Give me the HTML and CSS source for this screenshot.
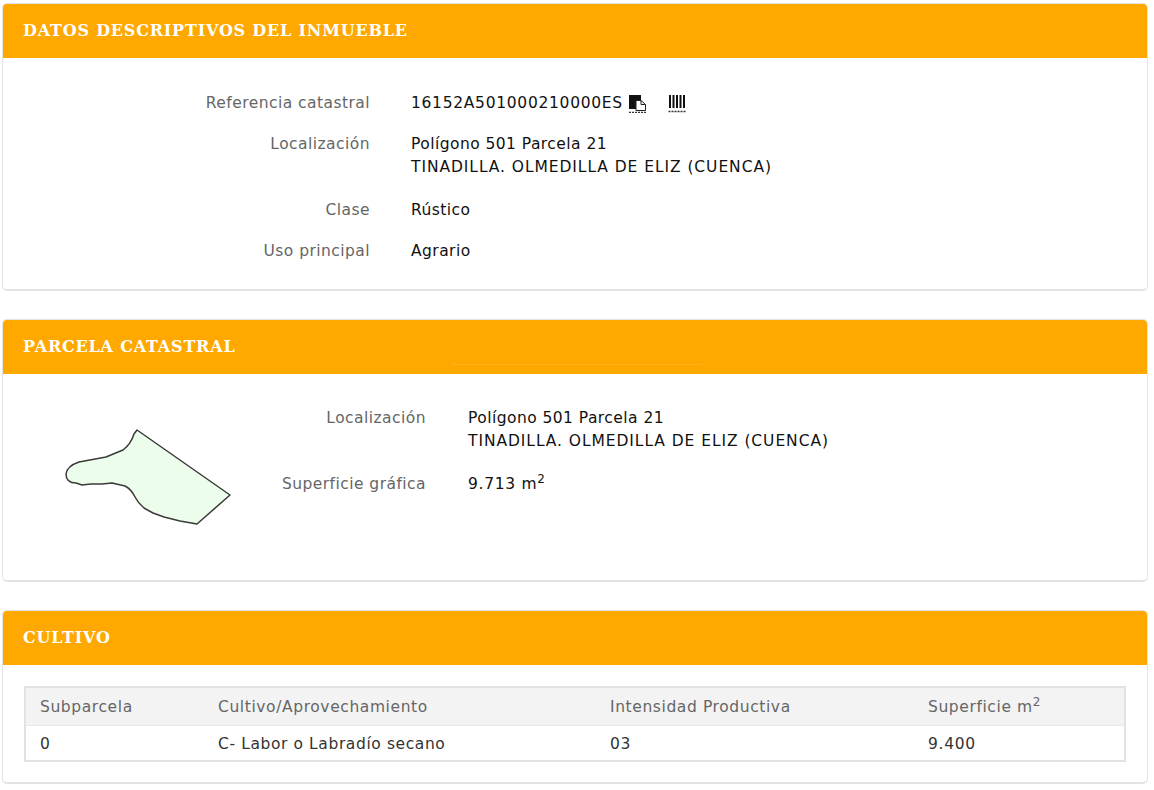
FILE: index.html
```html
<!DOCTYPE html>
<html lang="es">
<head>
    <meta charset="UTF-8">
    <title>Datos descriptivos del inmueble</title>
    <link rel="stylesheet" href="styles.css">
</head>
<body>

    <section class="panel panel-datos">
        <h2 class="panel-title">DATOS DESCRIPTIVOS DEL INMUEBLE</h2>
        <dl class="fields">
            <dt>Referencia catastral</dt>
            <dd class="ref-row">
                <span class="ref-code">16152A501000210000ES</span>
                <a class="icon-link icon-copy" href="#" title="Copiar">
                    <svg width="18" height="19" viewBox="0 0 18 19">
                        <rect x="0" y="1" width="12" height="14" fill="#111"/>
                        <path d="M7 6.500h5l4.500 4v6H7z" fill="#fff" stroke="#222" stroke-width="1"/>
                        <path d="M12 6.500v4h4.500" fill="none" stroke="#222" stroke-width="1"/>
                        <path d="M0 18.500h17" stroke="#333" stroke-width="1.500" stroke-dasharray="2 1"/>
                    </svg>
                </a>
                <a class="icon-link icon-barcode" href="#" title="Código de barras">
                    <svg width="18" height="19" viewBox="0 0 18 19">
                        <path d="M2 1v13M5.500 1v13M9 1v13M12.500 1v13M16 1v13" stroke="#111" stroke-width="2"/>
                        <path d="M0.500 17.500h17" stroke="#333" stroke-width="1.500" stroke-dasharray="2 1"/>
                    </svg>
                </a>
            </dd>
            <dt>Localización</dt>
            <dd class="multi">Polígono 501 Parcela 21<br><span class="caps">TINADILLA. OLMEDILLA DE ELIZ (CUENCA)</span></dd>
            <dt>Clase</dt>
            <dd>Rústico</dd>
            <dt>Uso principal</dt>
            <dd>Agrario</dd>
        </dl>
    </section>

    <section class="panel panel-parcela">
        <h2 class="panel-title">PARCELA CATASTRAL<span class="watermark"></span></h2>
        <div class="parcela-body">
            <svg class="parcela-map" width="200" height="110" viewBox="0 0 200 110">
                <path d="M105 4 L198 69 L165 98 L148 95 L132 91 L121 87 L112 82 Q106 77 103 71 Q99 63 93 60 L80 57 L70 58 L59 58 L50 59 L44 57 Q34 57 34 48 Q35 40 47 36 L74 31 L91 24 Q99 18 102 8 Z" fill="#ecfdec" stroke="#3a3a3a" stroke-width="1.500" stroke-linejoin="round"/>
            </svg>
            <dl class="fields fields-parcela">
                <dt>Localización</dt>
                <dd>Polígono 501 Parcela 21<br><span class="caps">TINADILLA. OLMEDILLA DE ELIZ (CUENCA)</span></dd>
                <dt>Superficie gráfica</dt>
                <dd class="ref-code">9.713 m<sup>2</sup></dd>
            </dl>
        </div>
    </section>

    <section class="panel panel-cultivo">
        <h2 class="panel-title">CULTIVO</h2>
        <div class="table-wrap">
            <table class="cultivo-table">
                <thead>
                    <tr>
                        <th class="col-sub">Subparcela</th>
                        <th class="col-cult">Cultivo/Aprovechamiento</th>
                        <th class="col-int">Intensidad Productiva</th>
                        <th>Superficie m<sup>2</sup></th>
                    </tr>
                </thead>
                <tbody>
                    <tr>
                        <td class="ref-code">0</td>
                        <td>C- Labor o Labradío secano</td>
                        <td class="ref-code">03</td>
                        <td class="ref-code">9.400</td>
                    </tr>
                </tbody>
            </table>
        </div>
    </section>

</body>
</html>
```

FILE: styles.css
```css
* {
    box-sizing: border-box;
}

body {
    margin: 0;
    padding: 3px 6px 0 2px;
    background-color: #fff;
    color: #111;
    font-family: "DejaVu Sans", Verdana, sans-serif;
    font-size: 15.5px;
    letter-spacing: 0.45px;
    line-height: 23px;
}

.panel {
    border: 1px solid #e4e4e4;
    border-bottom-width: 2px;
    border-radius: 5px;
    margin-bottom: 28px;
    overflow: hidden;
}

.panel-datos { height: 288px; }
.panel-parcela { height: 263px; }
.panel-cultivo { height: 174px; }

.panel-title {
    position: relative;
    margin: 0;
    height: 54px;
    padding-left: 20px;
    background-color: #ffa800;
    color: #fff;
    font-family: "DejaVu Serif", "DejaVu Sans", serif;
    font-size: 16px;
    font-weight: bold;
    letter-spacing: 0.8px;
    line-height: 54px;
}

/* faint mark showing through the header */
.watermark {
    position: absolute;
    left: 449px;
    bottom: 0;
    width: 250px;
    height: 10px;
    border-top: 1px solid rgba(255, 255, 255, 0.1);
}

.fields {
    display: grid;
    grid-template-columns: 367px 1fr;
    column-gap: 41px;
    row-gap: 18px;
    margin: 0;
    padding-top: 34px;
}

.fields dt {
    color: #666;
    text-align: right;
}

.fields dd {
    margin: 0;
}

.fields .multi {
    margin-bottom: 2px;
}

.caps {
    letter-spacing: 0.93px;
}

.ref-code {
    letter-spacing: 0.7px;
}

.ref-row {
    display: flex;
    align-items: center;
}

.icon-link {
    display: flex;
    height: 19px;
}

.icon-copy { margin-left: 6px; }
.icon-barcode { margin-left: 21px; }

.parcela-body {
    display: flex;
}

.parcela-map {
    flex: none;
    display: block;
    margin: 52px 0 0 29px;
}

.fields-parcela {
    grid-template-columns: 194px 1fr;
    column-gap: 42px;
    padding-top: 33px;
    row-gap: 20px;
    align-content: start;
}

sup {
    font-size: 12px;
    line-height: 0;
}

.table-wrap {
    padding: 21px 21px 0;
}

.cultivo-table {
    width: 100%;
    border-collapse: collapse;
    border: 2px solid #e2e2e2;
    table-layout: fixed;
    letter-spacing: 0.6px;
}

.cultivo-table th {
    background-color: #f3f3f3;
    color: #666;
    font-weight: normal;
    text-align: left;
    height: 38px;
    padding: 3px 14px 0;
    border-bottom: 1px solid #e8e8e8;
}

.cultivo-table td {
    height: 36px;
    padding: 3px 14px 0;
    color: #333;
}

.col-sub { width: 179px; }
.col-cult { width: 392px; }
.col-int { width: 318px; }
```
